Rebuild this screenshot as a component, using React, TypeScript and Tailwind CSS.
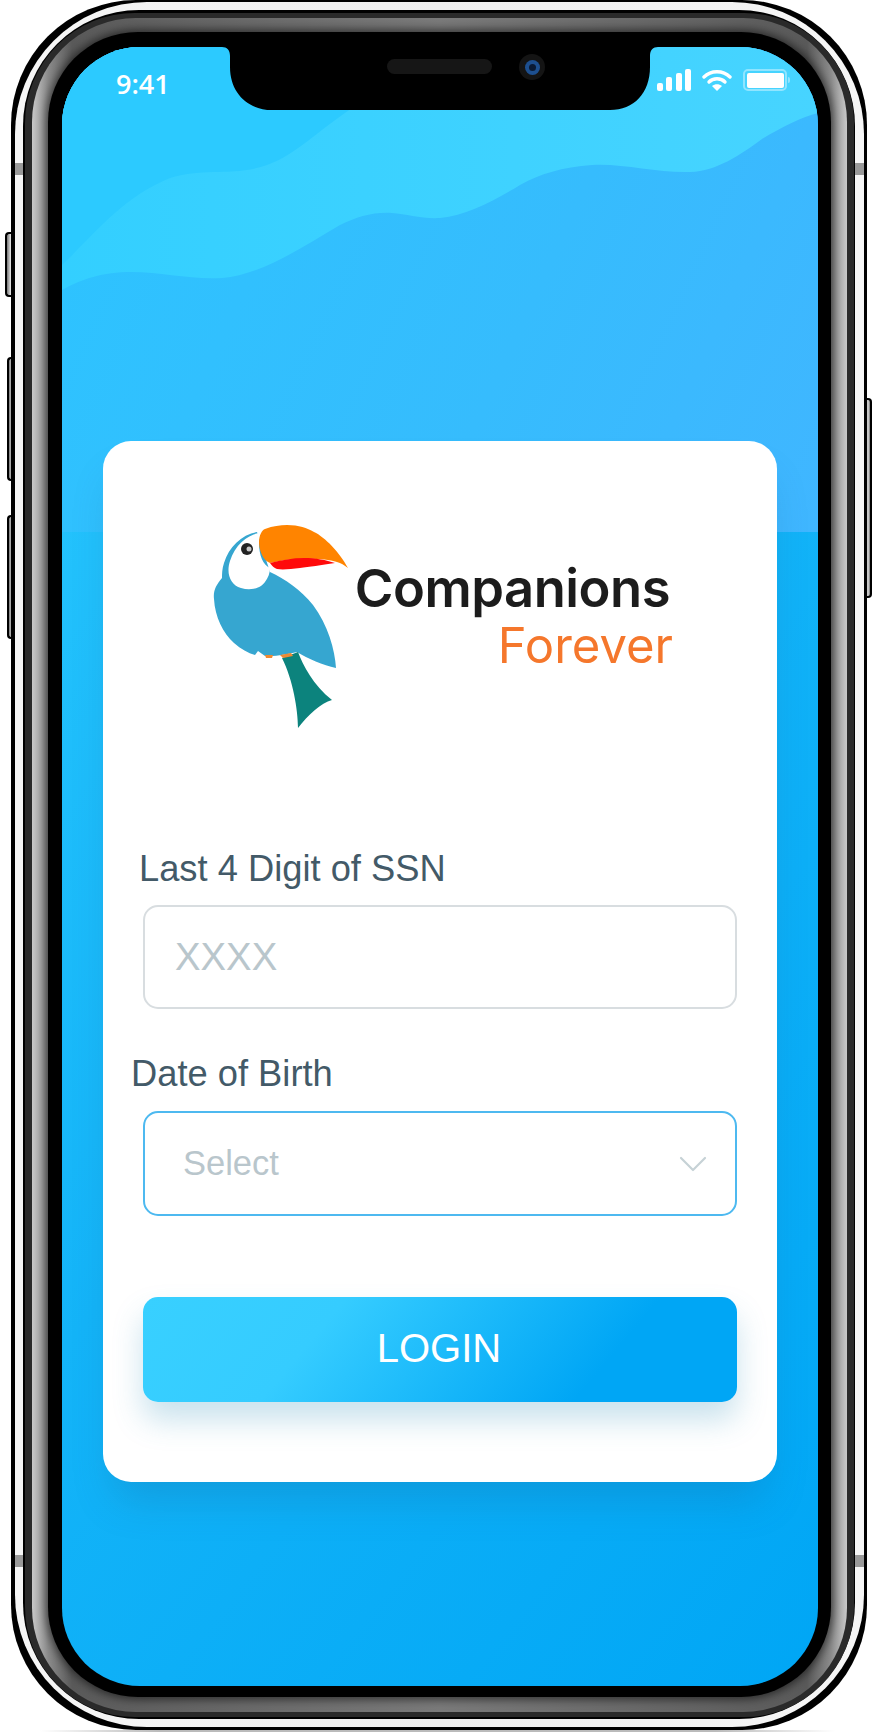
import { ChevronDown } from "lucide-react";

const sans = "font-['Liberation_Sans',Arial,sans-serif]";

function Notch() {
  return (
    <div className="absolute left-[160px] top-0 z-20 h-[64px] w-[436px]">
      <svg width="436" height="64" viewBox="0 0 436 64" className="block">
        <path d="M0 0C5 0 8 3 8 9V20C8 46 26 63 50 63H388C412 63 428 46 428 20V9C428 3 431 0 436 0Z" fill="#000" />
      </svg>
      {/* speaker */}
      <div className="absolute left-[165px] top-[12px] h-[15px] w-[105px] rounded-full bg-[#161616]" />
      {/* camera */}
      <div className="absolute left-[297px] top-[7px] flex h-[26px] w-[26px] items-center justify-center rounded-full bg-[#141414]">
        <div className="flex h-[15px] w-[15px] items-center justify-center rounded-full bg-[#1d4f8f]">
          <div className="h-[7px] w-[7px] rounded-full bg-[#0a1a33]" />
        </div>
      </div>
    </div>
  );
}

function StatusBar() {
  return (
    <div className="relative z-30 flex h-[60px] items-start justify-between pl-[54px] pr-[28px] pt-[18px] text-white">
      <span className="mt-[1px] font-['Open_Sans',sans-serif] text-[27px] leading-[36px] font-semibold">9:41</span>
      <div className="flex items-start pt-[4px]">
        <div className="flex h-[22px] items-end gap-[3.5px]">
          <div className="h-[8px] w-[6px] rounded-[2px] bg-white" />
          <div className="h-[14px] w-[6px] rounded-[2px] bg-white" />
          <div className="h-[18px] w-[6px] rounded-[2px] bg-white" />
          <div className="h-[22px] w-[6px] rounded-[2px] bg-white" />
        </div>
        <svg width="30" height="22" viewBox="0 0 30 22" className="ml-[11px]" fill="none" stroke="#fff" strokeWidth="3.4" strokeLinecap="round">
          <path d="M2 8C9 1 21 1 28 8" />
          <path d="M7 13C11 8.700 19 8.700 23 13" />
          <path d="M15 22L10 17C13 14.700 17 14.700 20 17Z" fill="#fff" stroke="none" />
        </svg>
        <div className="ml-[11px] flex h-[22px] w-[44px] items-center justify-center rounded-[5px] border-2 border-white/40">
          <div className="h-[15px] w-[37px] rounded-[2px] bg-white" />
        </div>
        <div className="ml-[1px] mt-[8px] h-[6px] w-[2px] rounded-r-sm bg-white/40" />
      </div>
    </div>
  );
}

function Waves() {
  return (
    <div className="absolute inset-x-0 top-0 h-[485px] bg-[linear-gradient(115deg,#2cc4ff_0%,#36bcfd_60%,#40b6ff_100%)]">
      <svg width="756" height="485" viewBox="0 0 756 485" className="block">
        <defs>
          <linearGradient id="band" x1="0" x2="1" y1="0" y2="0">
            <stop offset="0" stopColor="#33cfff" />
            <stop offset="1" stopColor="#47d4ff" />
          </linearGradient>
        </defs>
        <path d="M0 243C20 232 40 225 70 225C100 225 130 233 160 231C200 228 240 200 278 178C295 170 310 165 330 166C345 167 360 172 378 171C405 168 430 155 458 138C478 127 500 120 530 118C560 116 595 126 628 125C655 124 678 108 700 92C720 80 740 70 756 66V0H0Z" fill="url(#band)" />
        {/* top left corner stays darker */}
        <path d="M0 218C30 190 60 150 108 131C140 120 170 130 205 118C235 108 265 75 300 55V0H0Z" fill="#2ccaff" />
      </svg>
    </div>
  );
}

function Toucan() {
  return (
    <svg width="136" height="204" viewBox="0 0 136 204" className="shrink-0">
      {/* body */}
      <path d="M44 7C28 10 16 22 11 38C9 44 9 49 9 53C3 60 0 66 1 74C2 92 10 108 21 118C28 124 35 128 42 130L45 126L52 131C62 132 74 129 84 127C95 134 110 140 123 143C122 125 115 100 100 80C88 65 72 54 57 47Z" fill="#36a6d0" />
      {/* tail */}
      <path d="M69 133L85 127C90 140 100 160 119 175C108 178 95 190 85 203C85 185 80 155 69 133Z" fill="#0c837d" />
      {/* face */}
      <path d="M46 8C34 10 22 20 17 36C13 48 17 60 28 63C38 66 48 63 52 57C55 53 57 48 57 43C50 40 46 30 46 18Z" fill="#fff" />
      <circle cx="34" cy="24" r="6" fill="#222" />
      <circle cx="36" cy="24" r="2.500" fill="#c8c8c8" />
      {/* beak */}
      <path d="M46 18C46 10 49 5 52 4C60 1 67 0 74 0C86 0 94 3 101 7C112 12 127 28 135 43C131 40 128 38 124 37C112 33 91 33 72 35L57 38C52 36 47 30 46 18Z" fill="#ff8400" />
      <path d="M57 38C68 35 80 33 91 33C103 33 113 35 122 38C108 40 96 42 87 43C78 44 70 45 64 44C61 43 59 41 57 38Z" fill="#ff0a0a" />
      {/* feet */}
      <path d="M52 130H60L59 133H53Z" fill="#ee8a33" />
      <path d="M67 130L78 128L80 131L70 133Z" fill="#ee8a33" />
    </svg>
  );
}

function Logo() {
  return (
    <div className="flex h-[287px] items-start pl-[110px] pt-[84px] blur-[0.5px]">
      <Toucan />
      <div className="ml-[-10px] w-[334px] pt-[35px] text-right font-['Inter',sans-serif]">
        <div className="pr-[3px] text-[52.500px] leading-[56px] font-semibold tracking-[-0.5px] text-[#1c1c1c]">Companions</div>
        <div className="mt-[2px] text-[49px] leading-[56px] text-[#f5772c]">Forever</div>
      </div>
    </div>
  );
}

function Card() {
  return (
    <div className={`${sans} mx-[41px] mt-[394px] h-[1041px] rounded-[28px] bg-white shadow-[0_28px_40px_-12px_rgba(20,100,150,0.28)]`}>
      <Logo />

      <div className="pl-[36px] pt-[120px] text-[36.300px] leading-[42px] text-[#435a68]">Last 4 Digit of SSN</div>
      <div className="mx-[40px] mt-[15px] flex h-[104px] items-center rounded-[15px] border-2 border-[#d8dde0] pl-[30px] text-[38.300px] text-[#b9c6cc]">
        XXXX
      </div>

      <div className="pl-[28px] pt-[44px] text-[36.300px] leading-[42px] text-[#435a68]">Date of Birth</div>
      <div className="mx-[40px] mt-[16px] flex h-[105px] items-center justify-between rounded-[15px] border-2 border-[#4db9f0] pl-[38px] pr-[18px] text-[34.500px] text-[#b9c6cc]">
        <span>Select</span>
        <ChevronDown size={48} strokeWidth={1.100} className="text-[#c6d2d6]" />
      </div>

      <button className="mx-[40px] mt-[81px] flex h-[105px] w-[594px] items-center justify-center rounded-[15px] bg-[linear-gradient(130deg,#38d0ff_0%,#35ccff_30%,#00a6f5_76%,#00a6f5_100%)] pb-[3px] pr-[2px] text-[40px] text-white shadow-[0_18px_30px_rgba(60,150,190,0.28)]">
        LOGIN
      </button>
    </div>
  );
}

export default function App() {
  return (
    <div className="relative h-[1732px] w-[875px] overflow-hidden bg-white">
      {/* side buttons */}
      <div className="absolute left-[5px] top-[232px] h-[65px] w-[9px] rounded-l-[4px] border-2 border-r-0 border-black bg-[linear-gradient(to_right,#777,#ddd_50%,#888)]" />
      <div className="absolute left-[7px] top-[357px] h-[124px] w-[8px] rounded-l-[4px] border-2 border-r-0 border-black bg-[linear-gradient(to_right,#777,#ddd_50%,#888)]" />
      <div className="absolute left-[7px] top-[515px] h-[124px] w-[8px] rounded-l-[4px] border-2 border-r-0 border-black bg-[linear-gradient(to_right,#777,#ddd_50%,#888)]" />
      <div className="absolute left-[866px] top-[398px] h-[200px] w-[6px] rounded-r-[4px] border-2 border-l-0 border-black bg-[linear-gradient(to_right,#888,#ddd_50%,#777)]" />

      {/* phone body, ring by ring; radii differ so the steel thins out at the corners */}
      <div className="relative ml-[11px] h-[1730px] w-[856px] rounded-[125px] bg-black pb-[3px] pl-[4px] pr-[3px] pt-[2px]">
        <div className="relative h-full rounded-[132px] bg-[linear-gradient(to_right,#f6f6f6,#eeeeee_50%,#f6f6f6)] pb-[8px] pl-[8px] pr-[9px] pt-[8px]">
          {/* antenna lines */}
          <div className="absolute left-0 top-[161px] h-[12px] w-[8px] bg-[#999]" />
          <div className="absolute right-0 top-[161px] h-[12px] w-[9px] bg-[#999]" />
          <div className="absolute bottom-[160px] left-0 h-[12px] w-[8px] bg-[#999]" />
          <div className="absolute bottom-[160px] right-0 h-[12px] w-[9px] bg-[#999]" />

          <div className="h-full rounded-[116px] bg-black pb-[2px] pl-[2px] pr-[1px] pt-[3px]">
            <div className="h-full rounded-[110px] bg-[#2a2a2a] px-[7px] py-[5px]">
              <div className="h-full rounded-[104px] bg-[linear-gradient(to_right,#c8c8c8,#8c8c8c_16px,#5a5a5a_40px,#7a7a7a_50%,#5a5a5a_calc(100%-40px),#8c8c8c_calc(100%-16px),#c8c8c8)] pb-[15px] pl-[16px] pr-[16px] pt-[14px]">
                <div className="h-full rounded-[90px] bg-black pb-[11px] pl-[14px] pr-[13px] pt-[15px] shadow-[0_0_10px_2px_rgba(0,0,0,0.6)]">
                  {/* screen */}
                  <div className="relative h-full overflow-hidden rounded-[78px] bg-[linear-gradient(128deg,#2ccaff_0%,#14b4f8_50%,#00a6f5_100%)]">
                    <Waves />
                    <Notch />
                    <StatusBar />
                    <div className="relative z-10 -mt-[60px]">
                      <Card />
                    </div>
                  </div>
                </div>
              </div>
            </div>
          </div>
        </div>
      </div>
      {/* faint floor shadow */}
      <div className="mx-[40px] h-[2px] bg-[linear-gradient(to_right,transparent,#bbbbbb_15%,#bbbbbb_85%,transparent)]" />
    </div>
  );
}
